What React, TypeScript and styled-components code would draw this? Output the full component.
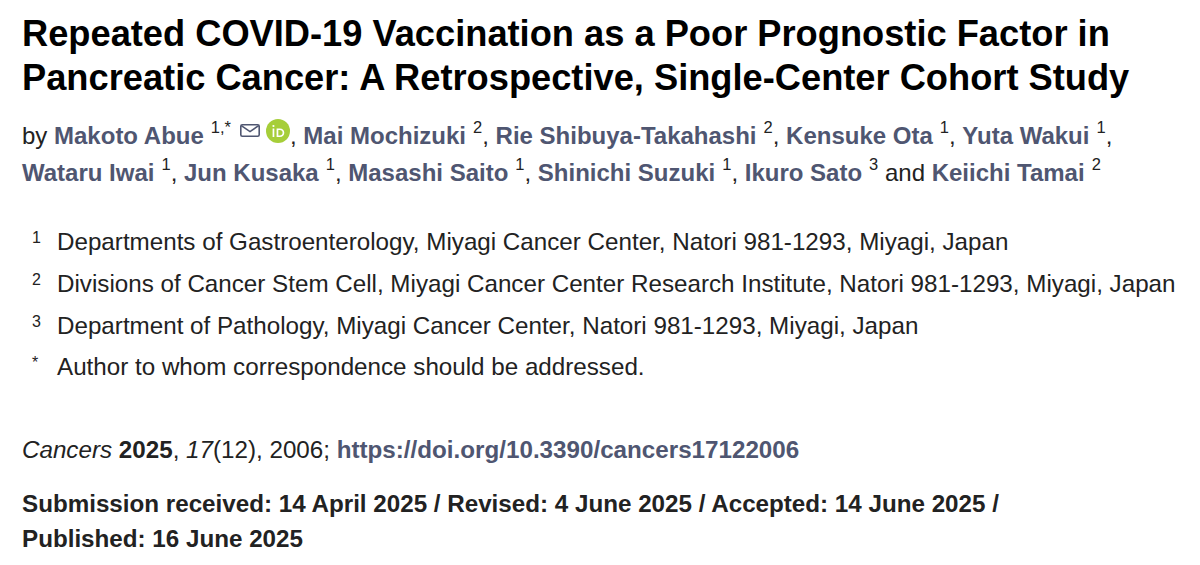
import styled, { createGlobalStyle } from "styled-components";

const GlobalStyle = createGlobalStyle`
  html, body {
    margin: 0;
    padding: 0;
    background: #ffffff;
  }
  body {
    font-family: "Liberation Sans", Arial, sans-serif;
    color: #222222;
  }
`;

const Page = styled.div`
  padding: 12px 22px 0 22px;
  width: 1200px;
  box-sizing: border-box;
`;

const Title = styled.h1`
  margin: 0;
  font-size: 36.25px;
  line-height: 44px;
  font-weight: 700;
  color: #000000;
`;

const Authors = styled.div`
  margin-top: 18px;
  font-size: 24px;
  line-height: 36.6px;
`;

const AuthorName = styled.a`
  color: #4f5671;
  font-weight: 700;
  text-decoration: none;
`;

const Sup = styled.sup`
  font-size: 16.5px;
  line-height: 0;
  vertical-align: 11px;
  margin-left: 7px;
`;

const IconWrap = styled.span`
  display: inline-flex;
  align-items: center;
  gap: 6px;
  margin-left: 9px;
  line-height: 0;
  vertical-align: 7px;
`;

const Affiliations = styled.ul`
  list-style: none;
  margin: 30px 0 0 0;
  padding: 0 0 0 10px;
`;

const Affiliation = styled.li`
  display: flex;
  font-size: 24.2px;
  line-height: 41.7px;
`;

const AffMark = styled.span`
  width: 25px;
  flex-shrink: 0;
  font-size: 16px;
  line-height: 1;
  padding-top: 9px;
`;

const Citation = styled.p`
  margin: 47px 0 0 0;
  font-size: 24.2px;
  line-height: 30px;
`;

const DoiLink = styled.a`
  color: #4f5671;
  font-weight: 700;
  text-decoration: none;
`;

const Dates = styled.p`
  margin: 21px 0 0 0;
  font-size: 24.2px;
  line-height: 35px;
  font-weight: 700;
`;

const MailIcon = () => (
  <svg width="20" height="13" viewBox="0 0 20 13">
    <rect x="0.8" y="0.8" width="18.4" height="11.4" rx="1.5" fill="none" stroke="#4f5671" strokeWidth="1.6" />
    <path d="M1.3 1.6 L10 7.6 L18.7 1.6" fill="none" stroke="#4f5671" strokeWidth="1.6" />
  </svg>
);

const OrcidIcon = () => (
  <svg width="24" height="24" viewBox="0 0 24 24">
    <circle cx="12" cy="12" r="12" fill="#a6ce39" />
    <rect x="6.6" y="9.5" width="1.7" height="8.5" fill="#ffffff" />
    <circle cx="7.45" cy="7" r="1.1" fill="#ffffff" />
    <path
      d="M10.6 9.5 H13.8 C16.6 9.5 18.3 11.3 18.3 13.75 C18.3 16.2 16.6 18 13.8 18 H10.6 Z M12.3 11 V16.5 H13.7 C15.6 16.5 16.6 15.4 16.6 13.75 C16.6 12.1 15.6 11 13.7 11 Z"
      fill="#ffffff"
      fillRule="evenodd"
    />
  </svg>
);

type Author = { name: string; mark: string; icons?: boolean };

const authors: Author[] = [
  { name: "Makoto Abue", mark: "1,*", icons: true },
  { name: "Mai Mochizuki", mark: "2" },
  { name: "Rie Shibuya-Takahashi", mark: "2" },
  { name: "Kensuke Ota", mark: "1" },
  { name: "Yuta Wakui", mark: "1" },
  { name: "Wataru Iwai", mark: "1" },
  { name: "Jun Kusaka", mark: "1" },
  { name: "Masashi Saito", mark: "1" },
  { name: "Shinichi Suzuki", mark: "1" },
  { name: "Ikuro Sato", mark: "3" },
  { name: "Keiichi Tamai", mark: "2" },
];

const affiliations = [
  { mark: "1", text: "Departments of Gastroenterology, Miyagi Cancer Center, Natori 981-1293, Miyagi, Japan" },
  { mark: "2", text: "Divisions of Cancer Stem Cell, Miyagi Cancer Center Research Institute, Natori 981-1293, Miyagi, Japan" },
  { mark: "3", text: "Department of Pathology, Miyagi Cancer Center, Natori 981-1293, Miyagi, Japan" },
  { mark: "*", text: "Author to whom correspondence should be addressed." },
];

export default function App() {
  return (
    <>
      <GlobalStyle />
      <Page>
        <Title>
          Repeated COVID-19 Vaccination as a Poor Prognostic Factor in Pancreatic Cancer: A
          Retrospective, Single-Center Cohort Study
        </Title>
        <Authors>
          by{" "}
          {authors.map((a, i) => {
            const last = i === authors.length - 1;
            const sep = i === authors.length - 2 ? " and " : last ? "" : ", ";
            return (
              <span key={a.name}>
                <AuthorName href="#">{a.name}</AuthorName>
                <Sup>{a.mark}</Sup>
                {a.icons && (
                  <IconWrap>
                    <MailIcon />
                    <OrcidIcon />
                  </IconWrap>
                )}
                {i === 4 ? (
                  <>
                    ,<br />
                  </>
                ) : (
                  sep
                )}
              </span>
            );
          })}
        </Authors>
        <Affiliations>
          {affiliations.map((a) => (
            <Affiliation key={a.mark}>
              <AffMark>{a.mark}</AffMark>
              <span>{a.text}</span>
            </Affiliation>
          ))}
        </Affiliations>
        <Citation>
          <i>Cancers</i> <b>2025</b>, <i>17</i>(12), 2006;{" "}
          <DoiLink href="#">https://doi.org/10.3390/cancers17122006</DoiLink>
        </Citation>
        <Dates>
          Submission received: 14 April 2025 / Revised: 4 June 2025 / Accepted: 14 June 2025 /
          <br />
          Published: 16 June 2025
        </Dates>
      </Page>
    </>
  );
}
